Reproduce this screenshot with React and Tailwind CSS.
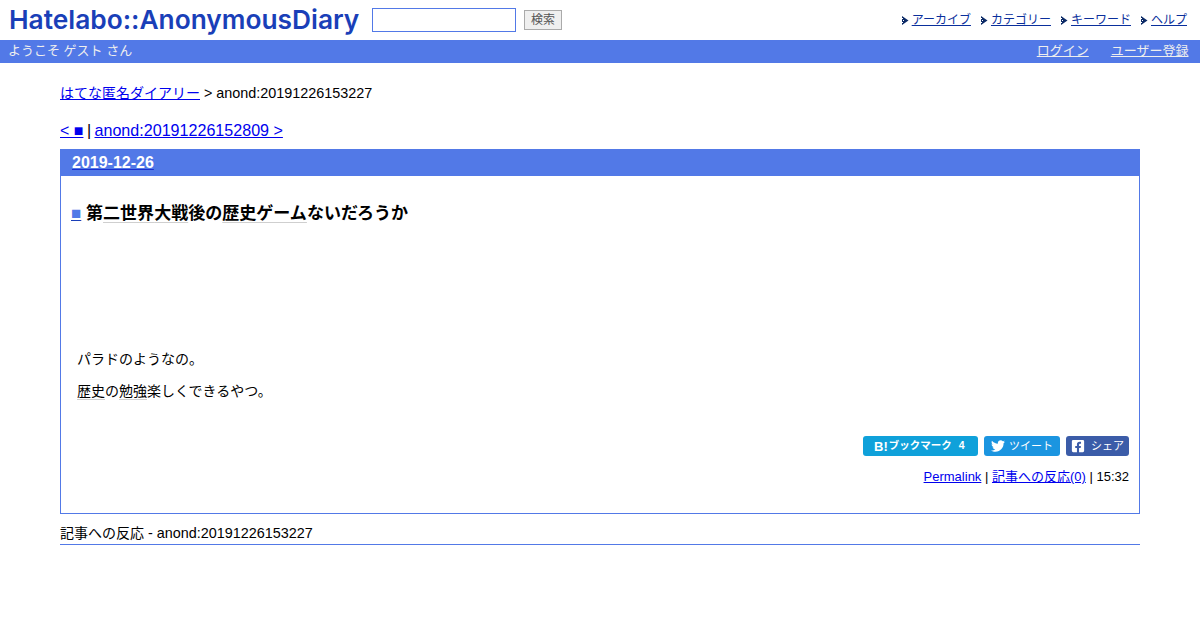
import React from "react";
import { FaTwitter, FaFacebookSquare } from "react-icons/fa";

const KW = ({ children }) => (
  <span className="underline decoration-[#cfcfcf] underline-offset-[3px] decoration-1">{children}</span>
);

const Arrow = () => (
  <svg width="7" height="9" viewBox="0 0 7 9" className="mr-[3px] shrink-0">
    <path d="M0 0 6.500 4.500 0 9z" fill="#0b2a66" />
    <path d="M1 4h1v1H1zM0 2h1v1H0zM0 6h1v1H0z" fill="#ffffff" />
  </svg>
);

const NavItem = ({ children }) => (
  <div className="flex items-center">
    <Arrow />
    <a href="#" className="text-[#0a2f9c] underline">{children}</a>
  </div>
);

export default function App() {
  return (
    <div className="min-h-[630px] bg-white text-black text-[14px] font-['Liberation_Sans','Noto_Sans_CJK_JP',sans-serif]">
      <header className="h-10 flex items-center pl-[9px] pr-[13px]">
        <div className="w-[349px] text-[#1a3fb8] text-[26.3px] leading-[40px] font-semibold font-['Inter',sans-serif] whitespace-nowrap">
          Hatelabo::AnonymousDiary
        </div>
        <input className="ml-[14px] w-[144px] h-6 border border-[#5279e7] bg-white outline-none" />
        <button className="ml-2 w-[38px] h-5 border border-[#aaaaaa] bg-[#efefef] text-[#555555] text-[12px] leading-[18px]">検索</button>
        <nav className="ml-auto flex gap-[10px] text-[12px]">
          <NavItem>アーカイブ</NavItem>
          <NavItem>カテゴリー</NavItem>
          <NavItem>キーワード</NavItem>
          <NavItem>ヘルプ</NavItem>
        </nav>
      </header>
      <div className="h-[23px] bg-[#5279e7] flex items-start justify-between pl-2 pr-[11.5px] text-[13px] leading-[21px] text-[#eeeeee]">
        <div>ようこそ ゲスト さん</div>
        <div className="flex gap-[22px]">
          <a href="#" className="underline">ログイン</a>
          <a href="#" className="underline">ユーザー登録</a>
        </div>
      </div>
      <main className="px-[60px]">
        <div className="mt-[21px] leading-[18px]">
          <a href="#" className="text-[#0000ee] underline">はてな匿名ダイアリー</a> <span className="text-[14.4px]">&gt; anond:20191226153227</span>
        </div>
        <div className="mt-[19px] text-[16px] leading-[19px]">
          <a href="#" className="text-[#0000ee] underline">&lt; ■</a><span className="-ml-px"> | </span><a href="#" className="text-[#0000ee] underline text-[16.1px] -ml-px">anond:20191226152809 &gt;</a>
        </div>
        <section className="mt-[9px] h-[365px] border border-[#5279e7] flex flex-col">
          <div className="h-[27px] -mt-px -mx-px shrink-0 bg-[#5279e7] pl-3 text-[16px] leading-[27px] font-bold">
            <a href="#" className="text-white underline decoration-[#1a2fd0]">2019-12-26</a>
          </div>
          <h3 className="mt-[27px] ml-[10px] text-[17.05px] leading-[22px] font-bold whitespace-nowrap">
            <a href="#" className="text-[#5279e7] underline decoration-[#1a3fb8] inline-block w-[15px] font-normal text-[17px]">■</a>第<KW>二世界</KW><KW>大戦</KW>後の<KW>歴史ゲーム</KW>ないだろうか
          </h3>
          <div className="mt-[125px] ml-4 leading-[18px]">パラドのようなの。</div>
          <div className="mt-[14px] ml-4 leading-[18px]"><KW>歴史</KW>の<KW>勉強</KW>楽しくできるやつ。</div>
          <div className="mt-[36px] mr-[10px] flex justify-end gap-[6px] text-white text-[11px]">
            <div className="w-[115px] h-5 rounded-[3px] bg-[#0fa1da] flex items-center pl-[11px] font-bold text-[10.5px]"><span className="text-[13px] mr-px leading-none">B!</span>ブックマーク<span className="ml-[7px] font-bold">4</span></div>
            <div className="w-[76px] h-5 rounded-[3px] bg-[#1b95e0] flex items-center justify-center"><FaTwitter className="mr-[4px] text-[14px]" />ツイート</div>
            <div className="w-[63px] h-5 rounded-[3px] bg-[#3b5ca8] flex items-center justify-center"><FaFacebookSquare className="mr-[6px] text-[14px]" />シェア</div>
          </div>
          <div className="mt-[13px] mr-[10px] text-right text-[13px] leading-[16px]">
            <a href="#" className="text-[#0000ee] underline">Permalink</a> | <a href="#" className="text-[#0000ee] underline">記事への反応(0)</a> | 15:32
          </div>
        </section>
        <div className="mt-[10px] border-b border-[#5279e7] leading-[18px] h-[21px]">記事への反応 <span className="text-[14.4px]">- anond:20191226153227</span></div>
      </main>
    </div>
  );
}
